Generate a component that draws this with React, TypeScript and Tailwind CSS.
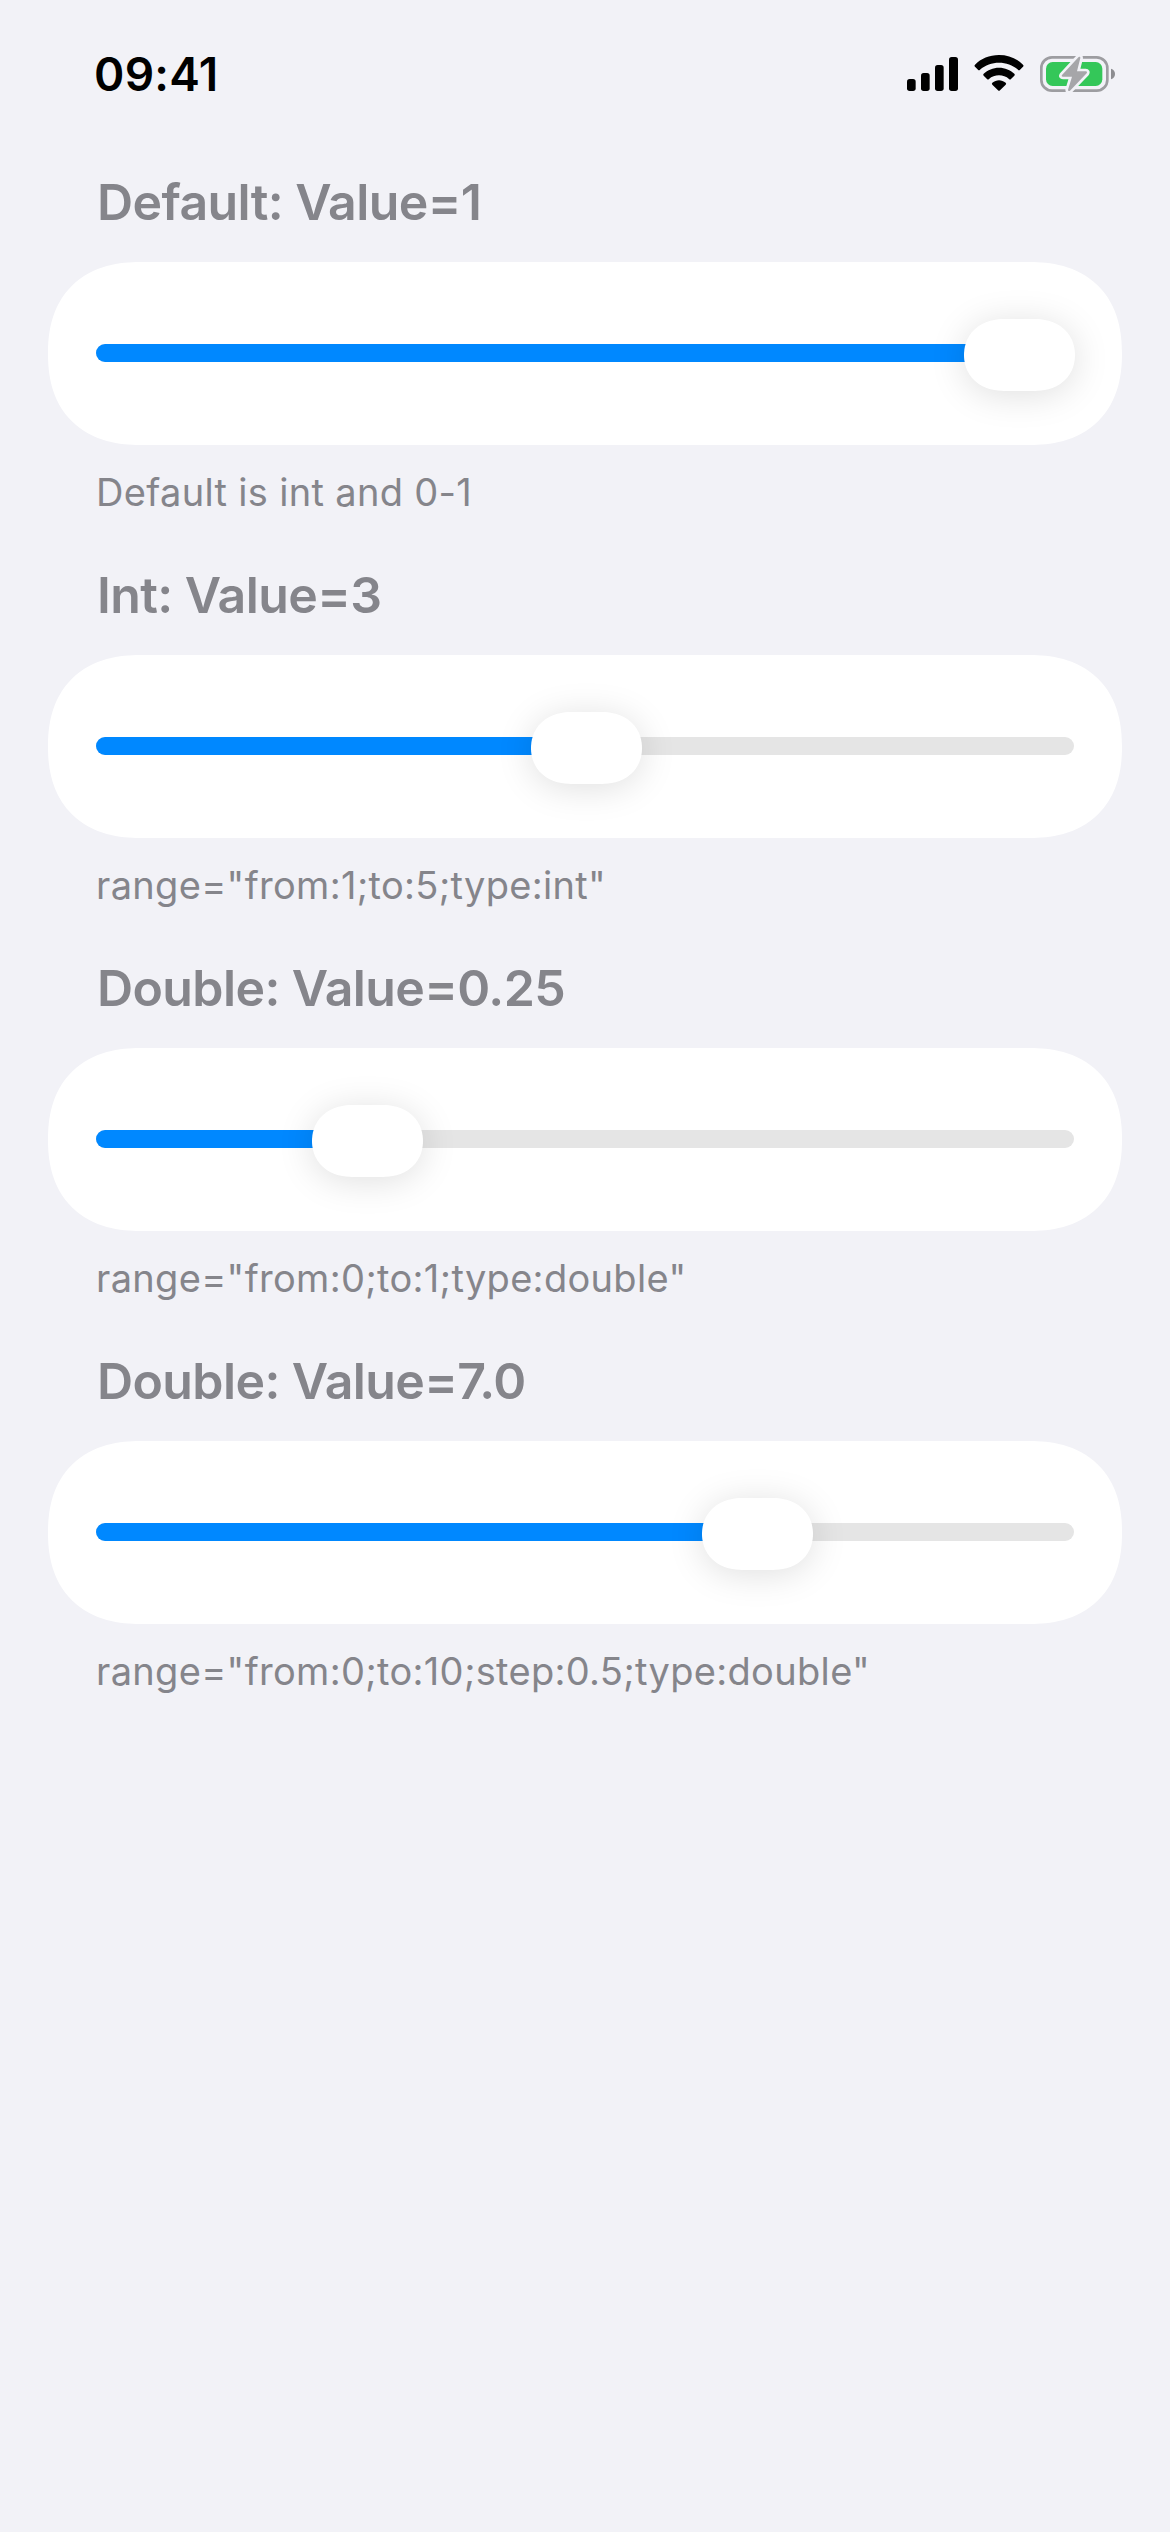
type Group = { title: string; note: string; knob: number };

// knob: distance in pixels from the start of the track to the thumb's left edge
const groups: Group[] = [
  { title: "Default: Value=1", note: "Default is int and 0-1", knob: 867.5 },
  { title: "Int: Value=3", note: 'range="from:1;to:5;type:int"', knob: 435 },
  { title: "Double: Value=0.25", note: 'range="from:0;to:1;type:double"', knob: 216 },
  { title: "Double: Value=7.0", note: 'range="from:0;to:10;step:0.5;type:double"', knob: 606 },
];

function Signal() {
  return (
    <svg className="w-[51px] h-[39px]" viewBox="51 42 153 117">
      <rect x="51" y="117" width="26" height="36" rx="8" />
      <rect x="93" y="99" width="26" height="54" rx="8" />
      <rect x="135" y="75" width="26" height="78" rx="8" />
      <rect x="177" y="51" width="27" height="102" rx="8" />
    </svg>
  );
}

function Wifi() {
  return (
    <svg className="w-[50px] h-[39px] ml-4" viewBox="252 42 150 117">
      <path d="M327 45C356 45 381 56 399 74Q402 77 399 80L390 89Q387 92 384 89C368 75 348 68 327 68C306 68 286 75 270 89Q267 92 264 89L255 80Q252 77 255 74C273 56 298 45 327 45Z" />
      <path d="M327 83C345 83 361 90 373 101Q376 104 373 107L363 117Q360 120 357 117C349 110 338 106 327 106C316 106 305 110 297 117Q294 120 291 117L281 107Q278 104 281 101C293 90 309 83 327 83Z" />
      <path d="M327 121C334 121 341 124 347 128Q350 131 347 134L330 151Q327 154 324 151L307 134Q304 131 307 128C313 124 320 121 327 121Z" />
    </svg>
  );
}

function Battery() {
  const bolt = "M566 51L516 105Q513 110 519 110H546L534 149Q534 155 540 152L590 100Q593 94 587 94H561L571 54Q571 48 566 51Z";
  return (
    <svg className="w-[77px] h-[39px] ml-[15px]" viewBox="447 42 231 117">
      <rect x="454" y="52" width="198" height="100" rx="32" fill="none" stroke="#9d9da1" strokeWidth="8" />
      <path d="M663 86Q675 90 675 102Q675 114 663 118Z" fill="#8d8d91" />
      <rect x="468" y="66" width="169" height="72" rx="20" fill="#34c759" />
      <path d={bolt} fill="#f2f2f7" stroke="#f2f2f7" strokeWidth="16" strokeLinejoin="round" />
      <path d={bolt} fill="#a6a6a9" />
    </svg>
  );
}

function Slider({ knob }: { knob: number }) {
  return (
    <div className="relative h-[18px] w-full rounded-full bg-[#e5e5e5]">
      <div className="h-full rounded-l-full bg-[#0088ff]" style={{ width: knob + 50 }} />
      <div
        className="absolute top-[-25px] h-[72px] w-[111px] rounded-[40px/36px] [corner-shape:superellipse(1.1)] bg-white shadow-[0_4px_36px_rgba(0,0,0,0.13)]"
        style={{ left: knob }}
      />
    </div>
  );
}

export default function App() {
  return (
    <div className="w-[1170px] h-[2532px] bg-[#f2f2f7] font-['Inter',sans-serif] overflow-hidden">
      <header className="h-[141px] flex items-start justify-between pl-[94px] pr-[54px]">
        <span className="pt-[46px] text-[46px] leading-[56px] font-semibold tracking-[0.3px]">09:41</span>
        <div className="flex pt-[54px]">
          <Signal />
          <Wifi />
          <Battery />
        </div>
      </header>
      {groups.map((g) => (
        <section key={g.note} className="h-[393px] px-[48px]">
          <h2 className="h-[121px] pt-[29px] pl-[49px] text-[50px] leading-[64px] font-semibold tracking-[-0.6px] text-[#85858b] whitespace-nowrap">
            {g.title}
          </h2>
          <div className="h-[182.67px] flex items-center px-[48px] rounded-[92px/91px] [corner-shape:superellipse(1.2)] bg-white">
            <Slider knob={g.knob} />
          </div>
          <p className="pt-[22.33px] pl-[48px] text-[38px] leading-[50px] tracking-[0.32px] text-[#85858b] whitespace-nowrap">{g.note}</p>
        </section>
      ))}
    </div>
  );
}
